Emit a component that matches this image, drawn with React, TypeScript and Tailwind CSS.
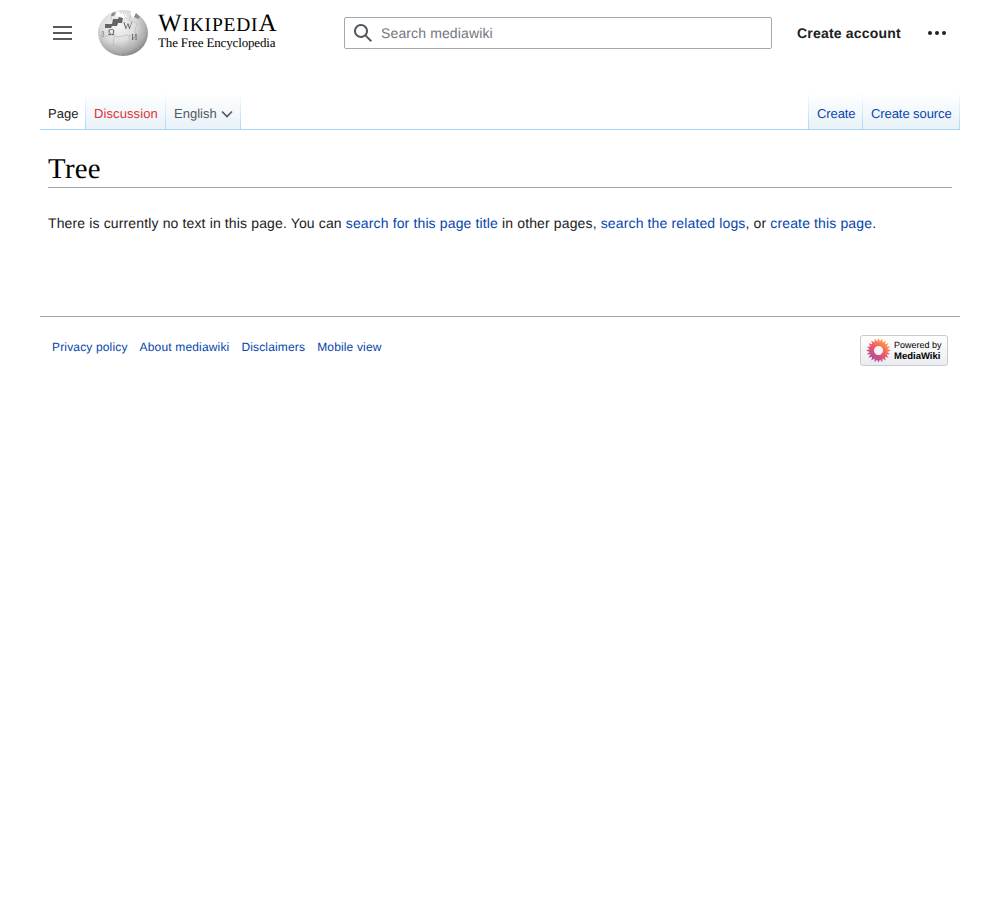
const sans = "font-['Liberation_Sans',Arial,sans-serif]";

function Globe() {
  return (
    <svg width="50" height="46" viewBox="0 0 50 46" className="block blur-[0.4px]">
      <defs>
        <radialGradient id="globe" cx="0.4" cy="0.34" r="0.7">
          <stop offset="0" stopColor="#f8f8f8" />
          <stop offset="0.5" stopColor="#dcdcdc" />
          <stop offset="0.82" stopColor="#aaaaaa" />
          <stop offset="1" stopColor="#808080" />
        </radialGradient>
      </defs>
      <ellipse cx="25" cy="23" rx="25" ry="23" fill="url(#globe)" />
      <path d="M19 0l4 4 3-2 3 5-5 2-3-3-3 1zM33 1l5 2-2 5-4-3z" fill="#fff" />
      <path d="M25 2c2 3 1 5 4 7M33 4l-2 6 7 3M14 4l-1 6M3 28l9-3 8 2 9-2 8 3 11-3M16 27l-1 8 7 3 1 8M31 26l1 8-7 4M39 13l-2 7 1 8M9 37l6-2M35 35l6 4" fill="none" stroke="#b4b4b4" strokeWidth="0.6" />
      <path d="M7 14h7l1-5h5l1-2 4 1-1 5h-4l-1 3H14l-1 2H7z" fill="#666" />
      <path d="M38 3l4 4-2 2-4-2zM14 3l4-1-2 4-3 0z" fill="#8a8a8a" />
      <text x="10" y="25" fontSize="9" fontFamily="'Liberation Serif',serif" fill="#444">Ω</text>
      <text x="25" y="19" fontSize="10" fontFamily="'Liberation Serif',serif" fill="#555">W</text>
      <text x="33" y="30" fontSize="9" fontFamily="'Liberation Serif',serif" fill="#666">И</text>
      <text x="3" y="25" fontSize="7" fontFamily="'Liberation Serif',serif" fill="#777">ვ</text>
    </svg>
  );
}

function Flower() {
  const spikes = Array.from({ length: 20 }, (_, i) => (i * 360) / 20);
  return (
    <svg width="25" height="25" viewBox="0 0 25 25" className="block blur-[0.3px]">
      <defs>
        <linearGradient id="mw" x1="0.85" y1="0.05" x2="0.2" y2="0.95">
          <stop offset="0" stopColor="#ffb03a" />
          <stop offset="0.5" stopColor="#f2566a" />
          <stop offset="1" stopColor="#9c4aa6" />
        </linearGradient>
      </defs>
      <path
        fillRule="evenodd"
        fill="url(#mw)"
        d={
          spikes
            .map((a) => {
              const r = (d: number) => (d * Math.PI) / 180;
              const p = (rad: number, d: number) =>
                `${(12.5 + rad * Math.sin(r(d))).toFixed(2)} ${(12.5 - rad * Math.cos(r(d))).toFixed(2)}`;
              return `M${p(9, a - 9)}L${p(12.3, a)}L${p(9, a + 9)}Z`;
            })
            .join("") + "M12.5 3.5a9 9 0 1 0 .01 0ZM12.5 8a4.5 4.5 0 1 1-.01 0Z"
        }
      />
    </svg>
  );
}

function Tab({ children, className }: { children: React.ReactNode; className: string }) {
  return (
    <div className={`flex h-[36px] items-center border-r border-solid [border-image:linear-gradient(to_bottom,#fff_0,#a7d7f9_100%)_1] bg-gradient-to-b from-white to-[#e8f2f8] pt-[7px] text-[13px] ${className}`}>
      {children}
    </div>
  );
}

export default function App() {
  return (
    <div className={`${sans} [text-rendering:geometricPrecision] min-h-[900px] bg-white px-10 text-[#202122] text-sm`}>
      <header className="flex h-[65px] items-start">
        <button className="mt-[26px] ml-[13px] flex h-[14px] w-[19px] flex-col justify-between">
          <span className="block h-[2px] w-full bg-[#54595d]" />
          <span className="block h-[2px] w-full bg-[#54595d]" />
          <span className="block h-[2px] w-full bg-[#54595d]" />
        </button>
        <div className="ml-[26px] mt-[10px] flex">
          <Globe />
          <div className="ml-[10px] w-[120px] font-['Liberation_Serif',serif] text-black">
            <div className="mt-[1px] h-[26px] text-[25px] leading-[26px] tracking-[0.8px]">
              W<span className="text-[19.5px]">IKIPEDI</span>A
            </div>
            <div className="-mt-[1px] text-[13px] leading-[14px] tracking-[-0.15px]">The Free Encyclopedia</div>
          </div>
        </div>
        <div className="ml-[66px] mt-[17px] flex h-[32px] w-[428px] items-center rounded-[2px] border border-[#a2a9b1] bg-white">
          <svg width="20" height="20" viewBox="0 0 20 20" className="ml-[8px] shrink-0" fill="#54595d">
            <path d="M12.2 13.6a7 7 0 1 1 1.4-1.4l5.4 5.4-1.4 1.4zM3 8a5 5 0 1 0 10 0A5 5 0 0 0 3 8" />
          </svg>
          <span className="ml-2 text-sm tracking-[0.13px] text-[#72777d]">Search mediawiki</span>
        </div>
        <div className="ml-[25px] mt-[25px] text-sm leading-4 font-bold tracking-[0.2px]">Create account</div>
        <div className="ml-[27.5px] mt-[31px] flex gap-[3px]">
          <span className="h-[4px] w-[4px] rounded-full bg-[#202122]" />
          <span className="h-[4px] w-[4px] rounded-full bg-[#202122]" />
          <span className="h-[4px] w-[4px] rounded-full bg-[#202122]" />
        </div>
      </header>

      <nav className="mt-[28px] flex h-[37px] justify-between border-b border-[#a7d7f9]">
        <div className="flex">
          <div className="flex h-[36px] w-[46px] items-center border-r border-solid [border-image:linear-gradient(to_bottom,#fff_0,#a7d7f9_100%)_1] pl-2 pt-[7px] text-[13px] text-[#202122]">Page</div>
          <Tab className="w-[80px] pl-2 tracking-[0.1px] text-[#dd3333]">Discussion</Tab>
          <Tab className="w-[75px] pl-2 text-[#54595d]">
            English
            <svg width="12" height="12" viewBox="0 0 12 12" className="ml-[4px] -mt-[1px]" fill="none" stroke="#54595d" strokeWidth="1.7">
              <path d="M1 3.5l5 5 5-5" />
            </svg>
          </Tab>
        </div>
        <div className="flex">
          <Tab className="w-[55px] border-l pl-2 tracking-[-0.1px] text-[#0645ad] [border-left-width:1px]">Create</Tab>
          <Tab className="w-[97px] pl-2 tracking-[-0.08px] text-[#0645ad]">Create source</Tab>
        </div>
      </nav>

      <main className="px-2">
        <h1 className="mt-[22px] border-b border-[#a2a9b1] font-['Liberation_Serif',serif] text-[28.8px] leading-[35px] tracking-[0.3px] text-black">Tree</h1>
        <p className="mt-[24px] text-sm leading-[22px] tracking-[0.137px]">
          There is currently no text in this page. You can <a className="text-[#0645ad]">search for this page title</a> in other pages,{" "}
          <a className="text-[#0645ad]">search the related logs</a>, or <a className="text-[#0645ad]">create this page</a>.
        </p>
      </main>

      <footer className="mt-[82px] flex justify-between border-t border-[#a2a9b1] px-3 pt-[18px]">
        <div className="mt-[4px] flex gap-3 text-xs leading-[16px] tracking-[0.16px] text-[#0645ad]">
          <a>Privacy policy</a>
          <a>About mediawiki</a>
          <a>Disclaimers</a>
          <a>Mobile view</a>
        </div>
        <div className="flex h-[31px] w-[88px] items-center rounded-[3px] border border-[#c8ccd1] bg-gradient-to-b from-white to-[#eaecf0] pl-[5px]">
          <Flower />
          <div className="ml-[3px] text-[9px] leading-[11px] text-black">
            <div>Powered by</div>
            <div className="text-[9.5px] font-semibold">MediaWiki</div>
          </div>
        </div>
      </footer>
    </div>
  );
}
